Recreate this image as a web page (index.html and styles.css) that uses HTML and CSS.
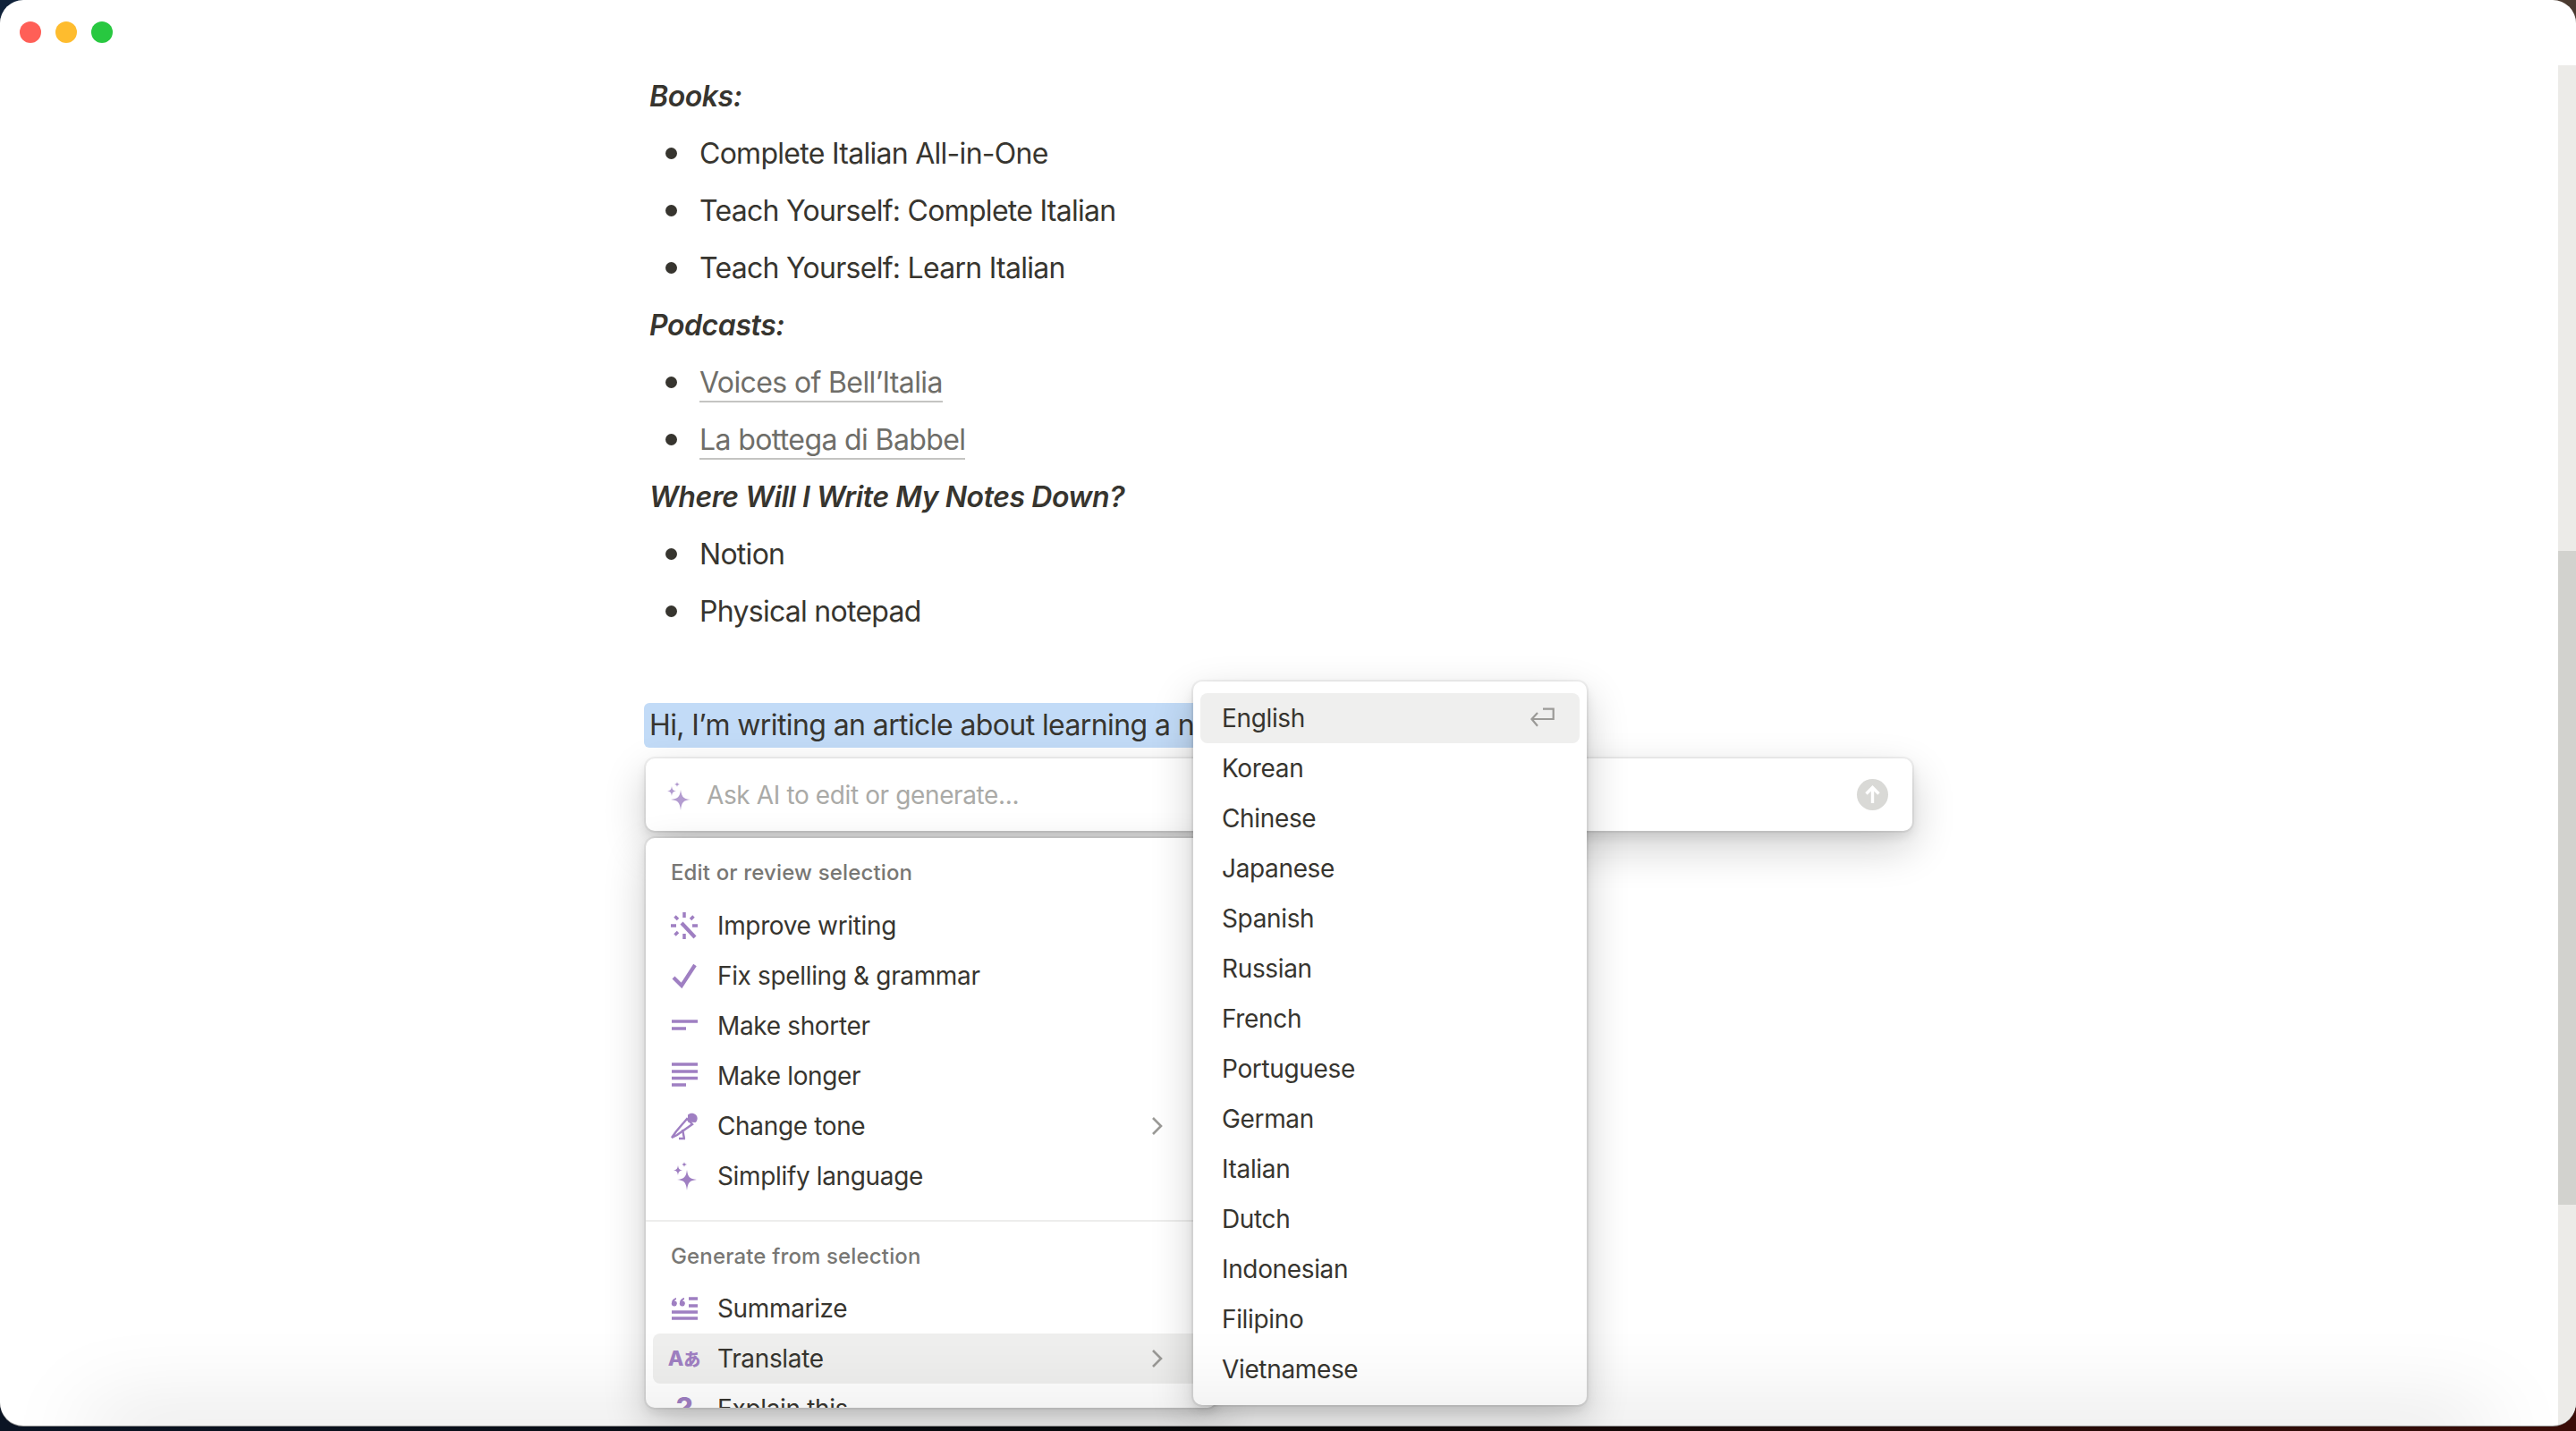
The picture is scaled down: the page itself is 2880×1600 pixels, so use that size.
FILE: index.html
```html
<!DOCTYPE html>
<html lang="en">
<head>
<meta charset="utf-8">
<title>Notes</title>
<link rel="stylesheet" href="styles.css">
</head>
<body>
<div class="window">
  <div class="lights"><span class="light red"></span><span class="light amber"></span><span class="light green"></span></div>

  <main class="doc">
    <p class="line head">Books:</p>
    <ul class="list">
      <li>Complete Italian All-in-One</li>
      <li>Teach Yourself: Complete Italian</li>
      <li>Teach Yourself: Learn Italian</li>
    </ul>
    <p class="line head">Podcasts:</p>
    <ul class="list">
      <li><a class="link">Voices of Bell’Italia</a></li>
      <li><a class="link">La bottega di Babbel</a></li>
    </ul>
    <p class="line head">Where Will I Write My Notes Down?</p>
    <ul class="list">
      <li>Notion</li>
      <li>Physical notepad</li>
    </ul>
    <p class="line selected"><span class="sel">Hi, I’m writing an article about learning a n</span></p>
  </main>

  <div class="scrollbar"><div class="thumb"></div></div>

  <div class="ai-input">
    <svg class="ai-spark" viewBox="0 0 32 32"><path class="light-fill" d="M19 9C20 17 22 19 30 20C22 21 20 23 19 32C18 23 16 21 8 20C16 19 18 17 19 9Z M9 5C9.600 9 10.500 10 14 10.500C10.500 11 9.600 12 9 16C8.400 12 7.500 11 4 10.500C7.500 10 8.400 9 9 5Z M15 0C15.300 2 15.800 2.500 18 3C15.800 3.500 15.300 4 15 6C14.700 4 14.200 3.500 12 3C14.200 2.500 14.700 2 15 0Z"/></svg>
    <span class="placeholder">Ask AI to edit or generate...</span>
    <span class="send"><svg viewBox="0 0 35 35"><path d="M17.500 27V10M10.500 16.500L17.500 9.500L24.500 16.500" fill="none" stroke="#fff" stroke-width="3.400"/></svg></span>
  </div>

  <div class="menu">
    <div class="menu-title first">Edit or review selection</div>
    <div class="row">
      <svg class="ico" viewBox="0 0 32 32"><path class="st" d="M16 1V7M16 25V31M1 16H7M25 16H31M5.500 5.500L9 9M26.500 5.500L23 9M5.500 26.500L9 23"/><path class="st thick" d="M13 13L28 29"/></svg>
      <span>Improve writing</span>
    </div>
    <div class="row">
      <svg class="ico" viewBox="0 0 32 32"><path class="st thick" d="M4 18L13 27L28 4"/></svg>
      <span>Fix spelling &amp; grammar</span>
    </div>
    <div class="row">
      <svg class="ico" viewBox="0 0 32 32"><path class="st" d="M2 11H31M2 19H18"/></svg>
      <span>Make shorter</span>
    </div>
    <div class="row">
      <svg class="ico" viewBox="0 0 32 32"><path class="st" d="M2 3H31M2 11H31M2 18.500H31M2 26H18"/></svg>
      <span>Make longer</span>
    </div>
    <div class="row">
      <svg class="ico" viewBox="0 0 32 32"><path class="fl" d="M20 3.500C22.500 1 26.500 1 29 3.500C31.500 6 31 10 28.500 12L20 11.500Z"/><path class="st narrow" d="M19 8L25 14L8 26L2 29L7 22Z"/><path class="st narrow" d="M14 20L16 30M10 30H17"/></svg>
      <span>Change tone</span>
      <svg class="chev" viewBox="0 0 14 22"><path d="M2 2L11 11L2 20" fill="none" stroke="#9b9a97" stroke-width="2.600"/></svg>
    </div>
    <div class="row">
      <svg class="ico" viewBox="0 0 32 32"><path class="fl" d="M19 9C20 17 22 19 30 20C22 21 20 23 19 32C18 23 16 21 8 20C16 19 18 17 19 9Z M9 4C9.600 8 10.500 9 14 9.500C10.500 10 9.600 11 9 15C8.400 11 7.500 10 4 9.500C7.500 9 8.400 8 9 4Z M16 0C16.300 2 16.800 2.500 19 3C16.800 3.500 16.300 4 16 6C15.700 4 15.200 3.500 13 3C15.200 2.500 15.700 2 16 0Z"/></svg>
      <span>Simplify language</span>
    </div>
    <div class="divider"></div>
    <div class="menu-title">Generate from selection</div>
    <div class="row">
      <svg class="ico" viewBox="0 0 32 32"><path class="fl" d="M2 9.500C2 7 3.500 5 7 4V6C5.800 6.400 5.300 7 5.200 7.500A3 3 0 1 1 2 9.500Z M11 9.500C11 7 12.500 5 16 4V6C14.800 6.400 14.300 7 14.200 7.500A3 3 0 1 1 11 9.500Z"/><path class="st" d="M21 5H31M21 13H31M2 20H31M2 27H31"/></svg>
      <span>Summarize</span>
    </div>
    <div class="row active">
      <span class="ico trans"><b>A</b><b class="kana">あ</b></span>
      <span>Translate</span>
      <svg class="chev" viewBox="0 0 14 22"><path d="M2 2L11 11L2 20" fill="none" stroke="#9b9a97" stroke-width="2.600"/></svg>
    </div>
    <div class="row">
      <span class="ico qmark">?</span>
      <span>Explain this</span>
    </div>
  </div>

  <div class="submenu">
    <div class="sub-row active"><span>English</span>
      <svg class="ret" viewBox="0 0 27 24"><path d="M14 1.700H25.700V13H1.500M8 6L1.500 13L8 20.700" fill="none" stroke="#9b9a97" stroke-width="2.200"/></svg>
    </div>
    <div class="sub-row">Korean</div>
    <div class="sub-row">Chinese</div>
    <div class="sub-row">Japanese</div>
    <div class="sub-row">Spanish</div>
    <div class="sub-row">Russian</div>
    <div class="sub-row">French</div>
    <div class="sub-row">Portuguese</div>
    <div class="sub-row">German</div>
    <div class="sub-row">Italian</div>
    <div class="sub-row">Dutch</div>
    <div class="sub-row">Indonesian</div>
    <div class="sub-row">Filipino</div>
    <div class="sub-row">Vietnamese</div>
  </div>

  <div class="dock-shadow"></div>
</div>
</body>
</html>
```
FILE: styles.css
```css
* { box-sizing: border-box; }
html, body { margin: 0; padding: 0; }
body {
  width: 2880px;
  height: 1600px;
  overflow: hidden;
  font-family: Inter, "Noto Sans CJK JP", sans-serif;
  color: #37352f;
  background:
    linear-gradient(90deg, #10223a 0, #10223a 50%, #4a3a30 50%, #4a3a30 100%) top / 100% 800px no-repeat,
    linear-gradient(90deg, #0b1424 0, #060606 50%, #3b0d08 100%) bottom / 100% 800px no-repeat;
}
.window {
  position: relative;
  width: 2880px;
  height: 1594px;
  background: #fff;
  border-radius: 26px;
  overflow: hidden;
  box-shadow: 0 1px 0 #8f8f8f;
}
.lights {
  position: absolute;
  top: 24px;
  left: 22px;
  display: flex;
  gap: 16px;
}
.light { width: 24px; height: 24px; border-radius: 50%; }
.red { background: #ff5f57; }
.amber { background: #febc2e; }
.green { background: #28c840; }

.doc { padding: 76px 0 0 726px; width: 2200px; }
.line { margin: 0; height: 64px; line-height: 64px; font-size: 32px; letter-spacing: -0.42px; }
.head { font-weight: 600; font-style: italic; }
.list { list-style: none; margin: 0; padding: 0 0 0 56px; }
.list li {
  position: relative;
  height: 64px;
  line-height: 64px;
  font-size: 32px;
  letter-spacing: -0.72px;
}
.list li::before {
  content: "";
  position: absolute;
  left: -38px;
  top: 25px;
  width: 13px;
  height: 13px;
  border-radius: 50%;
  background: #37352f;
}
.link { color: #6f6e69; border-bottom: 2px solid #c4c4c2; padding-bottom: 1px; letter-spacing: -0.62px; }
.selected { margin: 70px 0 0 -6px; height: 50px; line-height: 50px; letter-spacing: -0.6px; }
.sel { display: inline-block; padding: 0 6px; background: #c2dbf7; border-radius: 6px; white-space: nowrap; }

.scrollbar {
  position: absolute;
  top: 73px;
  right: 0;
  bottom: 0;
  width: 20px;
  background: #ecebe8;
}
.thumb { margin-top: 543px; height: 731px; background: #d2d2ce; }

.ai-input, .menu, .submenu {
  position: absolute;
  background: #fff;
  border-radius: 10px;
  box-shadow: 0 0 0 2px rgba(15,15,15,.05), 0 6px 12px rgba(15,15,15,.1), 0 18px 48px rgba(15,15,15,.2);
}
.ai-input {
  left: 722px;
  top: 848px;
  width: 1416px;
  height: 81px;
  display: flex;
  align-items: center;
  padding: 0 27px 0 20px;
}
.ai-spark { width: 32px; height: 32px; flex: none; margin-right: 16px; margin-top: 2px; }
.light-fill { fill: #b39cd0; }
.placeholder { flex: 1; font-size: 28px; color: #aaaaa7; letter-spacing: -0.38px; }
.send { width: 35px; height: 35px; border-radius: 50%; background: #d9d9d6; display: block; }
.send svg { display: block; width: 35px; height: 35px; }

.menu {
  left: 722px;
  top: 937px;
  width: 638px;
  height: 637px;
  overflow: hidden;
  padding: 0 8px;
}
.menu-title {
  height: 44px;
  line-height: 44px;
  padding-left: 20px;
  font-size: 24px;
  font-weight: 500;
  letter-spacing: 0.15px;
  color: #787774;
  margin-top: 17px;
  margin-bottom: 8px;
}
.menu-title.first { margin-top: 17px; margin-bottom: 9px; }
.row {
  height: 56px;
  display: flex;
  align-items: center;
  padding: 0 51px 0 19px;
  font-size: 28px;
  letter-spacing: -0.35px;
  border-radius: 8px;
}
.row.active, .sub-row.active { background: #efefee; }
.ico { width: 32px; height: 32px; flex: none; margin-right: 21px; display: block; }
.st { fill: none; stroke: #9f7fc2; stroke-width: 3.500; }
.st.thick { stroke-width: 4.200; }
.st.narrow { stroke-width: 2.400; }
.fl { fill: #9f7fc2; }
.trans {
  display: flex;
  align-items: center;
  justify-content: center;
  white-space: nowrap;
  color: #9f7fc2;
  font-size: 23px;
  font-weight: 800;
  line-height: 32px;
  letter-spacing: 0;
}
.trans b { font-weight: 800; }
.kana { font-family: "Noto Sans CJK JP", sans-serif; font-size: 19px; }
.qmark {
  text-align: center;
  color: #9f7fc2;
  font-weight: 700;
  font-size: 34px;
  line-height: 32px;
}
.chev { width: 14px; height: 22px; margin-left: auto; flex: none; }
.divider { height: 2px; background: #ededec; margin: 21px -8px 0; }

.submenu {
  left: 1334px;
  top: 762px;
  width: 440px;
  height: 809px;
  padding: 13px 8px;
}
.sub-row {
  height: 56px;
  display: flex;
  align-items: center;
  justify-content: space-between;
  padding: 0 28px 0 24px;
  font-size: 28px;
  letter-spacing: -0.35px;
  border-radius: 8px;
}
.ret { width: 27px; height: 24px; flex: none; }

.dock-shadow {
  position: absolute;
  left: 100px;
  right: 100px;
  bottom: -20px;
  height: 20px;
  box-shadow: 0 0 100px rgba(0,0,0,.33);
}
```
